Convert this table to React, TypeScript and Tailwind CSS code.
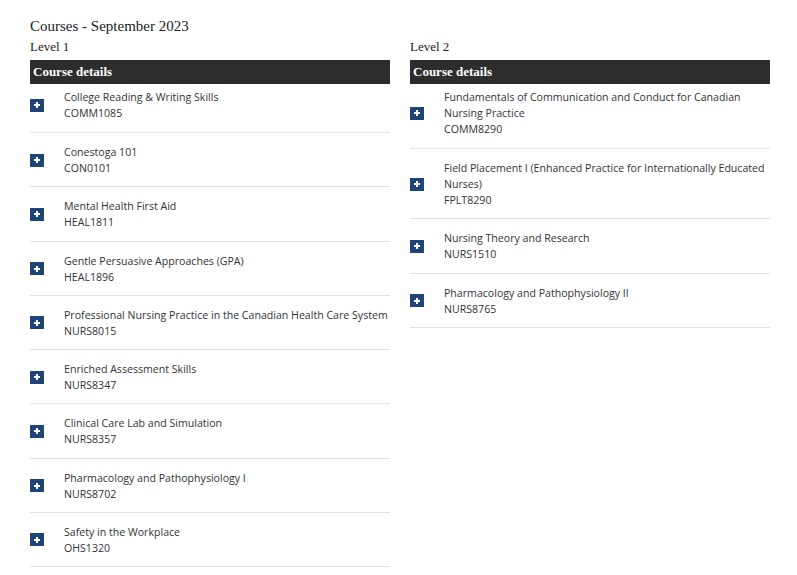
import React from "react";

type Course = { title: string; code: string };

const level1: Course[] = [
  { title: "College Reading & Writing Skills", code: "COMM1085" },
  { title: "Conestoga 101", code: "CON0101" },
  { title: "Mental Health First Aid", code: "HEAL1811" },
  { title: "Gentle Persuasive Approaches (GPA)", code: "HEAL1896" },
  { title: "Professional Nursing Practice in the Canadian Health Care System", code: "NURS8015" },
  { title: "Enriched Assessment Skills", code: "NURS8347" },
  { title: "Clinical Care Lab and Simulation", code: "NURS8357" },
  { title: "Pharmacology and Pathophysiology I", code: "NURS8702" },
  { title: "Safety in the Workplace", code: "OHS1320" },
];

const level2: Course[] = [
  { title: "Fundamentals of Communication and Conduct for Canadian Nursing Practice", code: "COMM8290" },
  { title: "Field Placement I (Enhanced Practice for Internationally Educated Nurses)", code: "FPLT8290" },
  { title: "Nursing Theory and Research", code: "NURS1510" },
  { title: "Pharmacology and Pathophysiology II", code: "NURS8765" },
];

const PlusBox = () => (
  <span className="flex items-center justify-center w-[14px] h-[13px] bg-[#1f4477] shrink-0">
    <svg width="8" height="8" viewBox="0 0 8 8">
      <path d="M4 1v6M1 4h6" stroke="#fff" strokeWidth="2" />
    </svg>
  </span>
);

const LevelColumn = ({ label, courses }: { label: string; courses: Course[] }) => (
  <div className="flex flex-col">
    <div className="font-['Liberation_Serif',serif] text-[13px] leading-[18px] text-[#222] mt-[2px] mb-[4px]">
      {label}
    </div>
    <div className="h-[24px] bg-[#2d2d2d] flex items-center pl-[3px] font-['Liberation_Serif',serif] font-bold text-[13px] text-white">
      Course details
    </div>
    {courses.map((c, i) => (
      <div
        key={c.code}
        className={`flex items-center border-b border-[#e2e2e2] ${i === 0 ? "pt-[5px] pb-[11px]" : "pt-[11px] pb-[10.25px]"}`}
      >
        <div className="w-[34px] shrink-0">
          <PlusBox />
        </div>
        <div className="text-[10.6px] leading-[16px] text-[#333]">
          <div>{c.title}</div>
          <div>{c.code}</div>
        </div>
      </div>
    ))}
  </div>
);

export default function App() {
  return (
    <div className="bg-white min-h-screen px-[30px] pt-[16px] font-['Open_Sans',sans-serif]">
      <h2 className="font-['Liberation_Serif',serif] text-[15px] leading-[20px] text-[#222]">
        Courses - September 2023
      </h2>
      <div className="grid grid-cols-[360px_360px] gap-x-[20px]">
        <LevelColumn label="Level 1" courses={level1} />
        <LevelColumn label="Level 2" courses={level2} />
      </div>
    </div>
  );
}
